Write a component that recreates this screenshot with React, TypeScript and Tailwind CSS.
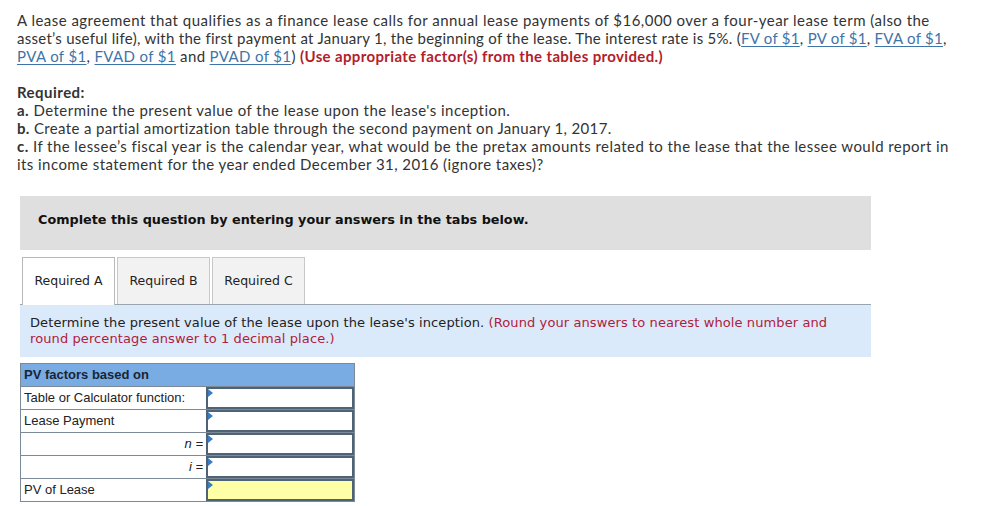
const body = "font-['Lato',sans-serif]";

function Link({ children }: { children: React.ReactNode }) {
  return <span className="text-[#3f74a8] underline underline-offset-2 decoration-1">{children}</span>;
}

function Tab({ label, active }: { label: string; active?: boolean }) {
  return (
    <div
      className={
        active
          ? 'relative z-10 -mb-px flex h-[48px] w-[93px] items-center justify-center border border-b-0 border-[#b8b8b8] bg-white'
          : 'flex h-[47px] w-[93px] items-center justify-center border border-b-0 border-[#c8c8c8] bg-[#f2f2f2]'
      }
    >
      {label}
    </div>
  );
}

function InputCell({ yellow }: { yellow?: boolean }) {
  return (
    <div className={`relative h-full border-2 border-[#4f6377] ${yellow ? 'bg-[#ffffa8]' : 'bg-white'}`}>
      <span className="absolute left-0 top-0 h-0 w-0 border-y-[4px] border-l-[5px] border-y-transparent border-l-[#3b7bbf]" />
    </div>
  );
}

function Row({ label, right, yellow }: { label: string; right?: boolean; yellow?: boolean }) {
  return (
    <div className="grid h-[23px] grid-cols-[185px_1fr] border-t border-[#7c8a98]">
      <div className={`flex items-center px-[3px] ${right ? 'justify-end italic' : ''}`}>{label}</div>
      <InputCell yellow={yellow} />
    </div>
  );
}

export default function App() {
  return (
    <div className="min-h-[506px] bg-white pl-[17px] pt-[11px] text-[#333]">
      <div className={`${body} w-[960px] text-[15px] leading-[18px] tracking-[0.47px]`}>
        <p>
          A lease agreement that qualifies as a finance lease calls for annual lease payments of $16,000 over a four-year lease term (also the
          <br />
          <span className="tracking-[0.28px]">
            asset’s useful life), with the first payment at January 1, the beginning of the lease. The interest rate is 5%. (<Link>FV of $1</Link>,{' '}
            <Link>PV of $1</Link>, <Link>FVA of $1</Link>,
          </span>
          <br />
          <span className="tracking-[0.36px]">
            <Link>PVA of $1</Link>, <Link>FVAD of $1</Link> and <Link>PVAD of $1</Link>){' '}
            <span className="font-bold text-[#b3202a]">(Use appropriate factor(s) from the tables provided.)</span>
          </span>
        </p>
        <p className="mt-[18px] font-bold">Required:</p>
        <p>
          <b>a.</b> Determine the present value of the lease upon the lease's inception.
        </p>
        <p className="tracking-[0.35px]">
          <b>b.</b> Create a partial amortization table through the second payment on January 1, 2017.
        </p>
        <p className="tracking-[0.44px]">
          <b>c.</b> If the lessee’s fiscal year is the calendar year, what would be the pretax amounts related to the lease that the lessee would report in
          <br />
          its income statement for the year ended December 31, 2016 (ignore taxes)?
        </p>
      </div>

      <div className="ml-[3px] mt-[23px] w-[851px] font-['DejaVu_Sans',Verdana,sans-serif] text-[13px] text-[#222]">
        <div className="h-[54px] bg-[#dfdfdf] pl-[18px] pt-[14px] text-[12.8px] font-bold text-[#111]">
          Complete this question by entering your answers in the tabs below.
        </div>

        <div className="mt-[7px] flex gap-[2px] pl-[2px] text-[12.5px] text-[#222]">
          <Tab label="Required A" active />
          <Tab label="Required B" />
          <Tab label="Required C" />
        </div>

        <div className="h-[53px] border-t border-[#9aa5b0] bg-[#dbeafa] px-[10px] pt-[10px] text-[13px] leading-[16px] tracking-[0.1px] text-[#222]">
          Determine the present value of the lease upon the lease's inception.{' '}
          <span className="text-[#b0203a]">
            (Round your answers to nearest whole number and
            <br />
            round percentage answer to 1 decimal place.)
          </span>
        </div>

        <div className="mt-[6px] w-[335px] border border-[#7c8a98] font-['Liberation_Sans',Arial,sans-serif] text-[13px] text-[#222]">
          <div className="flex h-[22px] items-center bg-[#78ace2] px-[3px] font-bold text-[#1a2533]">PV factors based on</div>
          <Row label="Table or Calculator function:" />
          <Row label="Lease Payment" />
          <Row label="n =" right />
          <Row label="i =" right />
          <Row label="PV of Lease" yellow />
        </div>
      </div>
    </div>
  );
}
